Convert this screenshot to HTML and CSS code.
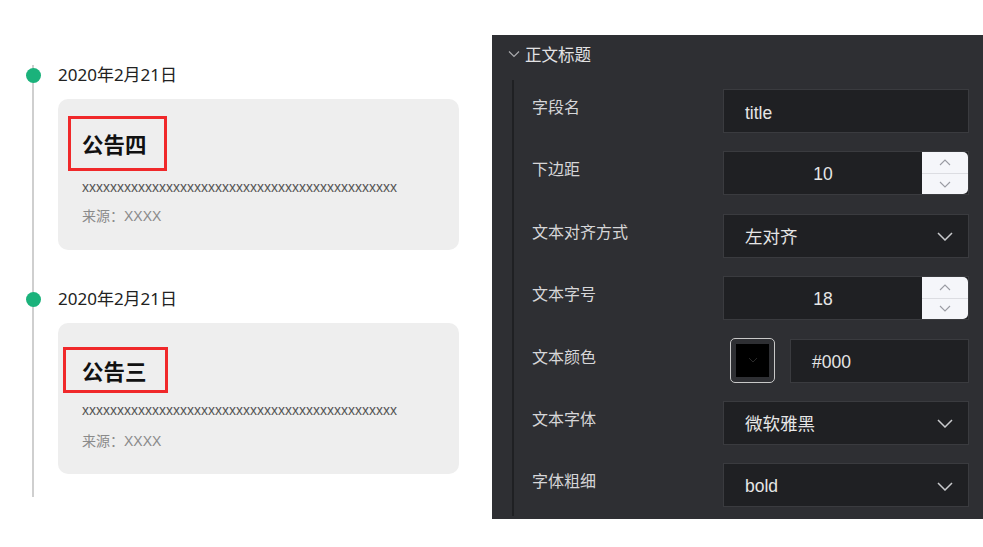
FILE: index.html
```html
<!DOCTYPE html>
<html lang="zh-CN">
<head>
<meta charset="utf-8">
<title>Timeline</title>
<link rel="stylesheet" href="styles.css">
</head>
<body>
<div class="page">
  <section class="left">
    <div class="timeline">
      <div class="tl-item">
        <span class="dot"></span>
        <div class="date">2020年2月21日</div>
        <div class="card card-a">
          <div class="title-box box-a"><h3 class="title">公告四</h3></div>
          <p class="body-text">xxxxxxxxxxxxxxxxxxxxxxxxxxxxxxxxxxxxxxxxxxxxx</p>
          <p class="source">来源：XXXX</p>
        </div>
      </div>
      <div class="tl-item second">
        <span class="dot"></span>
        <div class="date">2020年2月21日</div>
        <div class="card card-b">
          <div class="title-box box-b"><h3 class="title">公告三</h3></div>
          <p class="body-text">xxxxxxxxxxxxxxxxxxxxxxxxxxxxxxxxxxxxxxxxxxxxx</p>
          <p class="source">来源：XXXX</p>
        </div>
      </div>
    </div>
  </section>

  <section class="panel">
    <div class="panel-head">
      <svg class="head-chev" width="12" height="8" viewBox="0 0 12 8"><path d="M1 1.5 L6 6.5 L11 1.5" fill="none" stroke="#a9aaad" stroke-width="1.2"/></svg>
      <span>正文标题</span>
    </div>
    <div class="panel-body">
      <div class="row">
        <label class="lbl">字段名</label>
        <div class="field"><span class="val">title</span></div>
      </div>
      <div class="row">
        <label class="lbl">下边距</label>
        <div class="field num">
          <span class="num-val">10</span>
          <div class="stepper">
            <span class="step"><svg width="12" height="7" viewBox="0 0 12 7"><path d="M1 6 L6 1 L11 6" fill="none" stroke="#9a9ca3" stroke-width="1.1"/></svg></span>
            <span class="step"><svg width="12" height="7" viewBox="0 0 12 7"><path d="M1 1 L6 6 L11 1" fill="none" stroke="#9a9ca3" stroke-width="1.1"/></svg></span>
          </div>
        </div>
      </div>
      <div class="row">
        <label class="lbl">文本对齐方式</label>
        <div class="field select"><span class="val">左对齐</span>
          <svg class="sel-chev" width="16" height="9" viewBox="0 0 16 9"><path d="M1 1 L8 8 L15 1" fill="none" stroke="#c9cacd" stroke-width="1.5"/></svg>
        </div>
      </div>
      <div class="row">
        <label class="lbl">文本字号</label>
        <div class="field num">
          <span class="num-val">18</span>
          <div class="stepper">
            <span class="step"><svg width="12" height="7" viewBox="0 0 12 7"><path d="M1 6 L6 1 L11 6" fill="none" stroke="#9a9ca3" stroke-width="1.1"/></svg></span>
            <span class="step"><svg width="12" height="7" viewBox="0 0 12 7"><path d="M1 1 L6 6 L11 1" fill="none" stroke="#9a9ca3" stroke-width="1.1"/></svg></span>
          </div>
        </div>
      </div>
      <div class="row">
        <label class="lbl">文本颜色</label>
        <div class="color-wrap">
          <div class="swatch"><div class="swatch-in"><svg width="10" height="6" viewBox="0 0 10 6"><path d="M1 1 L5 5 L9 1" fill="none" stroke="#2a2a2a" stroke-width="1"/></svg></div></div>
          <div class="field color-text"><span class="val">#000</span></div>
        </div>
      </div>
      <div class="row">
        <label class="lbl">文本字体</label>
        <div class="field select"><span class="val">微软雅黑</span>
          <svg class="sel-chev" width="16" height="9" viewBox="0 0 16 9"><path d="M1 1 L8 8 L15 1" fill="none" stroke="#c9cacd" stroke-width="1.5"/></svg>
        </div>
      </div>
      <div class="row">
        <label class="lbl">字体粗细</label>
        <div class="field select"><span class="val">bold</span>
          <svg class="sel-chev" width="16" height="9" viewBox="0 0 16 9"><path d="M1 1 L8 8 L15 1" fill="none" stroke="#c9cacd" stroke-width="1.5"/></svg>
        </div>
      </div>
    </div>
  </section>
</div>
</body>
</html>
```
FILE: styles.css
```css
* { box-sizing: border-box; }
html, body { margin: 0; padding: 0; background: #ffffff; }
body {
  width: 983px;
  height: 547px;
  overflow: hidden;
  font-family: "Noto Sans", "Noto Sans CJK SC", sans-serif;
}
.page {
  display: flex;
  align-items: flex-start;
}

/* ---------- left timeline ---------- */
.left {
  width: 492px;
  flex: 0 0 492px;
  padding-top: 65px;
  padding-left: 32px;
}
.timeline {
  border-left: 2px solid #cfcfcf;
  padding-left: 24px;
  padding-bottom: 23px;
  width: 428px;
}
.tl-item { position: relative; }
.tl-item.second { margin-top: 39px; }
.dot {
  position: absolute;
  left: -32px;
  top: 3px;
  width: 15px;
  height: 15px;
  border-radius: 50%;
  background: #1bb27b;
}
.date {
  font-size: 17px;
  line-height: 20px;
  height: 20px;
  color: #222;
  font-family: "Noto Sans", "Noto Sans CJK SC", sans-serif;
}
.card {
  background: #eeeeee;
  border-radius: 10px;
  width: 401px;
  height: 151px;
}
.card-a { margin-top: 14px; padding-top: 17px; }
.card-b { margin-top: 14px; padding-top: 24px; }
.title-box {
  border: 3px solid #f0282a;
  display: flex;
  align-items: center;
}
.box-a { margin-left: 10px; width: 99px; height: 55px; padding-left: 11px; }
.box-b { margin-left: 5px; width: 105px; height: 46px; padding-left: 16px; padding-top: 1px; }
.title {
  margin: 0;
  font-size: 21.5px;
  line-height: 24px;
  font-weight: 700;
  color: #111;
  font-family: "Noto Sans CJK SC", sans-serif;
}
.body-text {
  margin: 7px 0 0 24px;
  font-family: "Liberation Sans", sans-serif;
  font-size: 14px;
  line-height: 18px;
  color: #555;
}
.card-b .body-text { margin-top: 8px; }
.source {
  margin: 11px 0 0 24px;
  font-family: "Liberation Sans", "Noto Sans CJK SC", sans-serif;
  font-size: 14px;
  line-height: 18px;
  color: #8a8a8a;
}
.card-b .source { margin-top: 13px; }

/* ---------- right panel ---------- */
.panel {
  flex: 0 0 491px;
  width: 491px;
  margin-top: 35px;
  height: 484px;
  background: #2e2f33;
  padding-bottom: 3px;
  display: flex;
  flex-direction: column;
}
.panel-head {
  height: 45px;
  display: flex;
  align-items: center;
  padding-left: 16px;
  padding-bottom: 8px;
  color: #e2e2e4;
  font-size: 16.5px;
  font-family: "Noto Sans CJK SC", sans-serif;
}
.head-chev { margin-right: 5px; }
.panel-body {
  flex: 1;
  margin-left: 20px;
  border-left: 2px solid #1f2023;
  padding: 9px 14px 0 18px;
  display: grid;
  grid-template-columns: 191px 1fr;
  grid-auto-rows: 44px;
  row-gap: 18.4px;
  align-content: start;
}
.row { display: contents; }
.lbl {
  align-self: start;
  padding-top: 6px;
  font-size: 16px;
  line-height: 22px;
  color: #d6d6d8;
  font-family: "Noto Sans CJK SC", sans-serif;
}
.field {
  background: #1f2023;
  border: 1px solid #3a3b3f;
  display: flex;
  align-items: center;
  padding-left: 21px;
  padding-top: 3px;
  position: relative;
  color: #e6e6e6;
  font-size: 17.5px;
  font-family: "Liberation Sans", "Noto Sans CJK SC", sans-serif;
}
.val { line-height: 22px; }
.select { justify-content: space-between; padding-right: 15px; padding-top: 2px; }
.select .val { font-family: "Liberation Sans", "Noto Sans CJK SC", sans-serif; }
.num { padding-left: 0; padding-top: 0; }
.num-val {
  flex: 1;
  text-align: center;
  padding-top: 3px;
}
.stepper {
  width: 46px;
  align-self: stretch;
  background: #f5f6fa;
  border-radius: 0 5px 5px 0;
  display: flex;
  flex-direction: column;
}
.step {
  flex: 1;
  display: flex;
  align-items: center;
  justify-content: center;
}
.step + .step { border-top: 1px solid #dcdde2; }
.color-wrap {
  display: flex;
  gap: 15px;
}
.swatch {
  width: 45px;
  height: 45px;
  margin-left: 7px;
  margin-top: -1px;
  border: 1px solid #c8c8c8;
  border-radius: 5px;
  padding: 5px;
  background: #2e2f33;
}
.swatch-in {
  width: 100%;
  height: 100%;
  background: #000;
  display: flex;
  align-items: center;
  justify-content: center;
}
.color-text { flex: 1; }
```
